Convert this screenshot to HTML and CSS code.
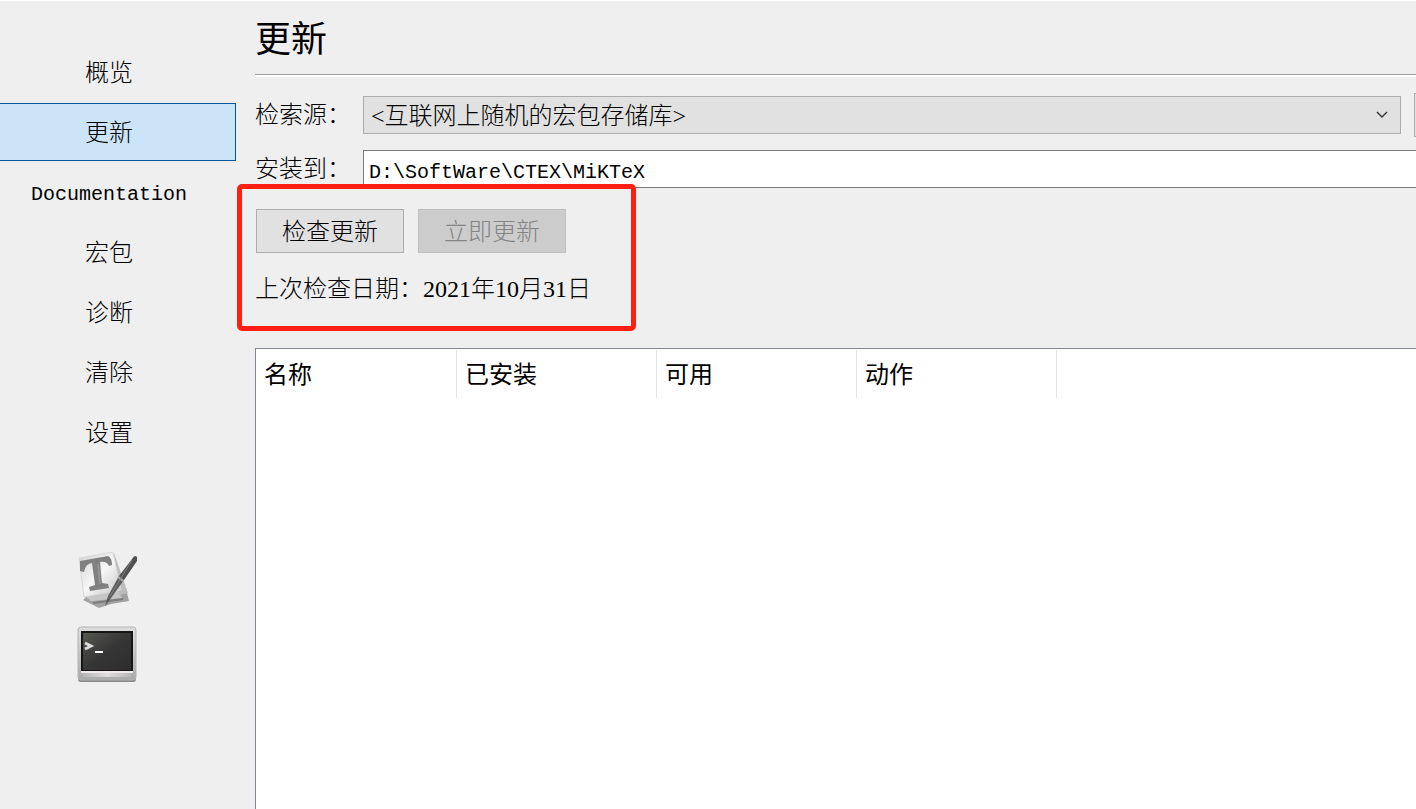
FILE: index.html
```html
<!DOCTYPE html>
<html lang="zh-CN">
  <head>
    <meta charset="utf-8">
    <title>更新</title>
    <link rel="stylesheet" href="styles.css">
  </head>
  <body>
    <div class="console">
      <div class="sidebar">
        <nav class="menu">
          <a href="#overview">概览</a>
          <a href="#updates" class="active">更新</a>
          <a href="#documentation" class="latin">Documentation</a>
          <a href="#packages">宏包</a>
          <a href="#diagnose">诊断</a>
          <a href="#cleanup">清除</a>
          <a href="#settings">设置</a>
        </nav>

        <div class="tools">
          <button type="button" aria-label="TeXworks">
            <svg width="60" height="60" viewBox="0 0 60 60">
              <defs>
                <linearGradient id="paper" x1="0" y1="0" x2="1" y2="1">
                  <stop offset="0" stop-color="#d2d2d2"/>
                  <stop offset=".5" stop-color="#f6f6f6"/>
                  <stop offset="1" stop-color="#c4c4c4"/>
                </linearGradient>
              </defs>
              <path d="M6 50L22 58L34 54L52 51L50 43L12 44Z" fill="#a2a2a2"/>
              <path d="M16 53L46 49" stroke="#7d7d7d" stroke-width="2"/>
              <path d="M8 46L41 41L45 48L14 51Z" fill="#c6c6c6"/>
              <path d="M37 3L51 43L42 45L32 8Z" fill="#bcbcbc"/>
              <path d="M2 8L36 2L44 40L7 47Z" fill="url(#paper)" stroke="#d8d8d8"/>
              <path d="M3 11L31 6Q35 8 35 15L32 16Q30 11 23 12L25 33L31 34L32 38L13 41L12 37L18 35L15 13Q8 14 7 22L3 21Z" fill="#808080"/>
              <path d="M21 14L23 34" stroke="#929292" stroke-width="2"/>
              <path d="M60 7Q58 4 55 9L42 26L47 30L60 11Z" fill="#505050"/>
              <path d="M42 26L47 30L34 48L30 54L28 56L31 46Z" fill="#5e5e5e"/>
              <path d="M41 27L46 31" stroke="#a9a9a9" stroke-width="2"/>
              <path d="M55 10L33 46" stroke="#828282"/>
            </svg>
          </button>
          <button type="button" aria-label="Terminal">
            <svg width="60" height="58" viewBox="0 0 60 58">
              <defs>
                <linearGradient id="frame" x1="0" y1="0" x2="0" y2="1">
                  <stop offset="0" stop-color="#dedede"/>
                  <stop offset="1" stop-color="#aaaaaa"/>
                </linearGradient>
                <linearGradient id="screen" x1="0" y1="0" x2="1" y2="1">
                  <stop offset="0" stop-color="#555850"/>
                  <stop offset=".5" stop-color="#363636"/>
                  <stop offset="1" stop-color="#2d2d2d"/>
                </linearGradient>
                <linearGradient id="base" x1="0" y1="0" x2="1" y2="0">
                  <stop offset="0" stop-color="#b7b7b7"/>
                  <stop offset=".5" stop-color="#dddddd"/>
                  <stop offset="1" stop-color="#b7b7b7"/>
                </linearGradient>
              </defs>
              <rect x="1" y="2" width="58" height="54" rx="3" fill="#888888"/>
              <rect x="1" y="1" width="58" height="53" rx="3" fill="url(#frame)" stroke="#b3b3b3"/>
              <rect x="3" y="2" width="54" height="3" fill="#dadada"/>
              <rect x="4" y="5" width="52" height="40" fill="#151515"/>
              <rect x="6" y="7" width="48" height="37" fill="url(#screen)"/>
              <rect x="4" y="45" width="52" height="2" fill="#efe9ed"/>
              <rect x="6" y="47" width="48" height="4" fill="url(#base)"/>
              <path d="M8 17L14 20L8 23" fill="none" stroke="#dddddd" stroke-width="3"/>
              <rect x="18" y="25" width="8" height="2" fill="#ffffff"/>
            </svg>
          </button>
        </div>
      </div>

      <main class="page">
        <h1>更新</h1>

        <div class="row source">
          <label for="source">检索源：</label>
          <div class="combo">
            <select id="source">
              <option>&lt;互联网上随机的宏包存储库&gt;</option>
            </select>
            <svg width="12" height="8" viewBox="0 0 12 8">
              <path d="M1 1L6 6L11 1" fill="none" stroke="#333333" stroke-width="1.4"/>
            </svg>
          </div>
          <button type="button" class="change" aria-label="更改"></button>
        </div>

        <div class="row target">
          <label for="target">安装到：</label>
          <input type="text" id="target" class="latin" value="D:\SoftWare\CTEX\MiKTeX" readonly>
        </div>

        <div class="update">
          <div class="buttons">
            <button type="button">检查更新</button>
            <button type="button" disabled>立即更新</button>
          </div>
          <p>上次检查日期：2021年10月31日</p>
          <div class="marker"></div>
        </div>

        <div class="packages">
          <table>
            <thead>
              <tr>
                <th>名称</th>
                <th>已安装</th>
                <th>可用</th>
                <th>动作</th>
              </tr>
            </thead>
          </table>
        </div>
      </main>
    </div>
  </body>
</html>
```

FILE: styles.css
```css
* {
  box-sizing: border-box;
}
body {
  margin: 0;
  background: #efefef;
  color: #000;
  font: 300 24px/32px "Liberation Serif", "Noto Sans CJK SC", serif;
}
button, select, input {
  font: inherit;
  color: inherit;
}
.latin {
  font-family: "Liberation Mono", monospace;
  font-size: 20px;
}
.console {
  display: flex;
  min-height: 100vh;
  border-top: 1px solid #fff;
}

/* Sidebar */
.sidebar {
  flex: none;
  width: 236px;
  padding-top: 42px;
}
.menu {
  display: flex;
  flex-direction: column;
  gap: 2px;
}
.menu a {
  height: 58px;
  padding: 13px 17px 0 0;
  border: 1px solid transparent;
  border-left: 0;
  color: inherit;
  text-align: center;
  text-decoration: none;
}
.menu .latin {
  line-height: 36px;
}
.menu .active {
  background: #cce4f7;
  border-color: #00549a;
}
.tools {
  display: flex;
  flex-direction: column;
  align-items: center;
  gap: 16px;
  margin-top: 89px;
  padding-right: 22px;
}
.tools button {
  padding: 0;
  border: 0;
  background: none;
}
.tools svg {
  display: block;
}

/* Update page */
.page {
  flex: 1;
  min-width: 0;
  display: flex;
  flex-direction: column;
  padding-left: 19px;
  overflow: hidden;
}
h1 {
  margin: 0 0 19px;
  padding: 15px 0 10px;
  border-bottom: 1px solid #a0a0a0;
  box-shadow: 0 2px #fff;
  font-size: 36px;
  font-weight: 400;
  line-height: 48px;
}
.row {
  display: flex;
  align-items: center;
}
.row label {
  flex: none;
  width: 108px;
}
/* the form is wider than the window */
.source {
  height: 44px;
  margin-top: -1px;
  margin-right: -30px;
}
.combo {
  flex: 1;
  display: grid;
  align-items: center;
}
.combo select, .combo svg {
  grid-area: 1 / 1;
}
.combo svg {
  justify-self: end;
  margin-right: 13px;
  pointer-events: none;
}
.combo select {
  width: 100%;
  height: 38px;
  padding: 2px 7px 0;
  border: 1px solid #adadad;
  border-radius: 0;
  background: #e1e1e1;
  appearance: none;
}
.change {
  width: 32px;
  height: 44px;
  margin-left: 13px;
  border: 1px solid #adadad;
  background: #e1e1e1;
}
.target {
  margin-top: 13px;
  margin-right: -30px;
}
.target input {
  flex: 1;
  min-width: 0;
  height: 38px;
  padding: 6px 5px 0;
  border: 1px solid #7a7a7a;
  border-radius: 0;
  background: #fff;
}
.update {
  position: relative;
  width: 380px;
  padding-top: 21px;
}
.buttons {
  display: flex;
  gap: 14px;
  padding-left: 1px;
}
.buttons button {
  width: 148px;
  height: 44px;
  padding: 2px 0 0;
  border: 1px solid #adadad;
  background: #e1e1e1;
}
.buttons button:disabled {
  border-color: #bfbfbf;
  background: #ccc;
  color: #838383;
}
.update p {
  margin: 20px 0 43px;
}
.marker {
  position: absolute;
  top: -4px;
  left: -18px;
  right: -1px;
  bottom: 17px;
  border: 5px solid #ff2013;
  border-radius: 5px;
  pointer-events: none;
}

/* Package list */
.packages {
  flex: 1;
  padding-top: 1px;
  border: 1px solid #828790;
  border-width: 1px 0 0 1px;
  background: #fff;
}
.packages table {
  border-collapse: separate;
  border-spacing: 0;
  table-layout: fixed;
  width: 801px;
}
.packages th {
  height: 48px;
  padding: 2px 8px 0;
  border-right: 1px solid #e5e5e5;
  font-weight: 400;
  text-align: left;
}
.packages th:first-child {
  width: 201px;
}
```
